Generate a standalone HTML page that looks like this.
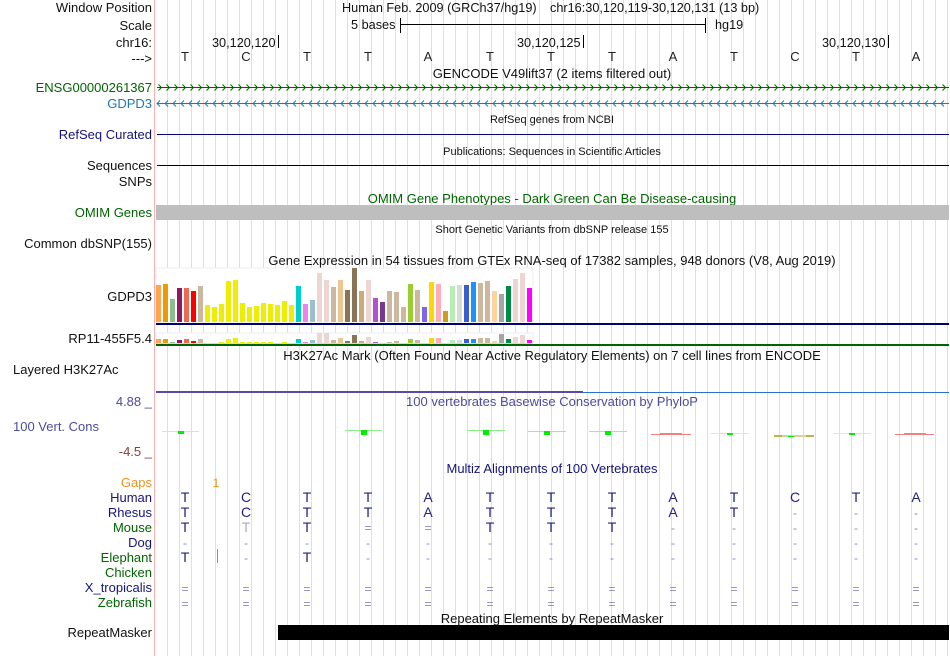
<!DOCTYPE html>
<html><head><meta charset="utf-8"><title>Genome Browser</title>
<style>
html,body{margin:0;padding:0;background:#fff}
body{width:950px;height:656px;overflow:hidden;position:relative}
#grid{position:absolute;left:156px;top:0;width:794px;height:656px;background-image:linear-gradient(to right,#dcdcf4 0,#dcdcf4 1px,transparent 1px,transparent 12px);background-size:12px 100%;background-position:11px 0;background-repeat:repeat-x}
#pink{position:absolute;left:154px;top:0;width:1px;height:656px;background:#ffb0b0}
svg{position:absolute;left:0;top:0}
text{font-family:"Liberation Sans",sans-serif;font-size:13px;fill:#111}
.l{text-anchor:end}
.c{text-anchor:middle}
.s{font-size:11px}
.r{font-size:12.7px}
.g{fill:#006400}
.n{fill:#151578}
.m text{text-anchor:middle;font-size:14px;fill:#22227f}
.t text{text-anchor:middle;font-size:13px;fill:#222}
.e text{text-anchor:middle;font-size:12px;fill:#8888bb}
</style></head><body>
<div id="grid"></div><div id="pink"></div>
<svg width="950" height="656" viewBox="0 0 950 656" shape-rendering="crispEdges">
<defs>
<pattern id="fw" x="158" y="84" width="8" height="7" patternUnits="userSpaceOnUse"><path d="M0.5 0.5L3.5 3.5L0.5 6.5" fill="none" stroke="#006400" stroke-width="1" shape-rendering="auto"/></pattern>
<pattern id="bw" x="156" y="100" width="8" height="7" patternUnits="userSpaceOnUse"><path d="M4 0.5L1 3.5L4 6.5" fill="none" stroke="#1f77b4" stroke-width="1" shape-rendering="auto"/></pattern>
</defs>

<!-- labels -->
<text x="152" y="12" class="l">Window Position</text>
<text x="152" y="30" class="l">Scale</text>
<text x="152" y="47" class="l">chr16:</text>
<text x="152" y="63" class="l">---&gt;</text>
<text x="152" y="92" class="l g">ENSG00000261367</text>
<text x="152" y="108" class="l" style="fill:#1f77b4">GDPD3</text>
<text x="152" y="139" class="l n">RefSeq Curated</text>
<text x="152" y="170" class="l">Sequences</text>
<text x="152" y="186" class="l">SNPs</text>
<text x="152" y="217" class="l g">OMIM Genes</text>
<text x="152" y="248" class="l">Common dbSNP(155)</text>
<text x="152" y="301" class="l">GDPD3</text>
<text x="152" y="343" class="l">RP11-455F5.4</text>
<text x="13" y="374">Layered H3K27Ac</text>
<text x="152" y="406" class="l" style="fill:#4c4c9e">4.88 _</text>
<text x="13" y="431" style="fill:#4c4c9e">100 Vert. Cons</text>
<text x="152" y="456" class="l" style="fill:#8b3c3c">-4.5 _</text>
<text x="152" y="487" class="l" style="fill:#f0921e">Gaps</text>
<text x="152" y="502" class="l n">Human</text>
<text x="152" y="517" class="l n">Rhesus</text>
<text x="152" y="532" class="l g">Mouse</text>
<text x="152" y="547" class="l n">Dog</text>
<text x="152" y="562" class="l g">Elephant</text>
<text x="152" y="577" class="l g">Chicken</text>
<text x="152" y="592" class="l n">X_tropicalis</text>
<text x="152" y="607" class="l g">Zebrafish</text>
<text x="152" y="637" class="l">RepeatMasker</text>

<!-- ruler -->
<text x="342" y="12" class="r">Human Feb. 2009 (GRCh37/hg19)</text>
<text x="550" y="12" class="r">chr16:30,120,119-30,120,131 (13 bp)</text>
<text x="351" y="29" class="r">5 bases</text>
<rect x="400" y="18" width="1" height="15" fill="#000"/>
<rect x="400" y="24" width="306" height="1" fill="#000"/>
<rect x="705" y="18" width="1" height="15" fill="#000"/>
<text x="715" y="29" class="r">hg19</text>
<text x="212" y="47" class="r">30,120,120</text><rect x="278" y="35" width="1" height="13" fill="#000"/>
<text x="517" y="47" class="r">30,120,125</text><rect x="583" y="35" width="1" height="13" fill="#000"/>
<text x="822" y="47" class="r">30,120,130</text><rect x="888" y="35" width="1" height="13" fill="#000"/>
<g class="t">
<text x="185" y="61">T</text><text x="246" y="61">C</text><text x="307" y="61">T</text><text x="368" y="61">T</text><text x="428" y="61">A</text><text x="490" y="61">T</text><text x="551" y="61">T</text><text x="612" y="61">T</text><text x="673" y="61">A</text><text x="734" y="61">T</text><text x="795" y="61">C</text><text x="856" y="61">T</text><text x="916" y="61">A</text>
</g>

<!-- gene tracks -->
<text x="552" y="78" class="c">GENCODE V49lift37 (2 items filtered out)</text>
<rect x="157" y="87" width="792" height="1" fill="#006400"/>
<rect x="157" y="84" width="792" height="7" fill="url(#fw)"/>
<rect x="157" y="103" width="792" height="1" fill="#1f77b4"/>
<rect x="156" y="100" width="793" height="7" fill="url(#bw)"/>
<text x="552" y="123" class="c s">RefSeq genes from NCBI</text>
<rect x="157" y="134" width="792" height="1" fill="#000080"/>
<text x="552" y="155" class="c s">Publications: Sequences in Scientific Articles</text>
<rect x="157" y="165" width="792" height="1" fill="#000"/>
<text x="552" y="203" class="c g">OMIM Gene Phenotypes - Dark Green Can Be Disease-causing</text>
<rect x="156" y="205" width="793" height="15" fill="#bebebe"/>
<text x="552" y="233" class="c s">Short Genetic Variants from dbSNP release 155</text>
<text x="552" y="265" class="c">Gene Expression in 54 tissues from GTEx RNA-seq of 17382 samples, 948 donors (V8, Aug 2019)</text>

<!-- GTEx main -->
<rect x="156" y="268" width="377" height="55" fill="#fff" stroke="#ececf0" stroke-width="1"/>
<g>
<rect x="156" y="285" width="5" height="37" fill="#FFA54F"/><rect x="163" y="284" width="5" height="38" fill="#EE9A00"/><rect x="170" y="299" width="5" height="23" fill="#8FBC8F"/><rect x="177" y="288" width="5" height="34" fill="#8B1C62"/><rect x="184" y="288" width="5" height="34" fill="#EE6A50"/><rect x="191" y="291" width="5" height="31" fill="#FF0000"/><rect x="198" y="286" width="5" height="36" fill="#CDB79E"/>
<rect x="205" y="305" width="5" height="17" fill="#EEEE00"/><rect x="212" y="307" width="5" height="15" fill="#EEEE00"/><rect x="219" y="304" width="5" height="18" fill="#EEEE00"/><rect x="226" y="281" width="5" height="41" fill="#EEEE00"/><rect x="233" y="280" width="5" height="42" fill="#EEEE00"/><rect x="240" y="303" width="5" height="19" fill="#EEEE00"/><rect x="247" y="307" width="5" height="15" fill="#EEEE00"/><rect x="254" y="306" width="5" height="16" fill="#EEEE00"/><rect x="261" y="303" width="5" height="19" fill="#EEEE00"/><rect x="268" y="304" width="5" height="18" fill="#EEEE00"/><rect x="275" y="305" width="5" height="17" fill="#EEEE00"/><rect x="282" y="301" width="5" height="21" fill="#EEEE00"/><rect x="289" y="305" width="5" height="17" fill="#EEEE00"/>
<rect x="296" y="286" width="5" height="36" fill="#00CDCD"/><rect x="303" y="304" width="5" height="18" fill="#EE82EE"/><rect x="310" y="300" width="5" height="22" fill="#9AC0CD"/><rect x="317" y="273" width="5" height="49" fill="#EED5D2"/><rect x="324" y="280" width="5" height="42" fill="#EED5D2"/><rect x="331" y="287" width="5" height="35" fill="#CDB79E"/><rect x="338" y="280" width="5" height="42" fill="#EEC591"/><rect x="345" y="290" width="5" height="32" fill="#8B7355"/><rect x="352" y="268" width="5" height="54" fill="#8B7355"/><rect x="359" y="291" width="5" height="31" fill="#CDAA7D"/><rect x="366" y="280" width="5" height="42" fill="#EED5D2"/><rect x="373" y="298" width="5" height="24" fill="#B452CD"/><rect x="380" y="302" width="5" height="20" fill="#7A378B"/><rect x="387" y="291" width="5" height="31" fill="#CDB79E"/><rect x="394" y="292" width="5" height="30" fill="#CDB79E"/><rect x="401" y="307" width="5" height="15" fill="#CDB79E"/><rect x="408" y="284" width="5" height="38" fill="#9ACD32"/><rect x="415" y="290" width="5" height="32" fill="#CDB79E"/><rect x="422" y="307" width="5" height="15" fill="#7A67EE"/><rect x="429" y="282" width="5" height="40" fill="#FFD700"/><rect x="436" y="284" width="5" height="38" fill="#FFAEB9"/><rect x="443" y="311" width="5" height="11" fill="#CD9B1D"/><rect x="450" y="286" width="5" height="36" fill="#B4EEB4"/><rect x="457" y="285" width="5" height="37" fill="#D9D9D9"/><rect x="464" y="285" width="5" height="37" fill="#3A5FCD"/><rect x="471" y="282" width="5" height="40" fill="#1E90FF"/><rect x="478" y="283" width="5" height="39" fill="#CDB79E"/><rect x="485" y="281" width="5" height="41" fill="#CDB79E"/><rect x="492" y="291" width="5" height="31" fill="#FFD39B"/><rect x="499" y="294" width="5" height="28" fill="#A6A6A6"/><rect x="506" y="286" width="5" height="36" fill="#008B45"/><rect x="513" y="279" width="5" height="43" fill="#EED5D2"/><rect x="520" y="273" width="5" height="49" fill="#EED5D2"/><rect x="527" y="288" width="5" height="34" fill="#FF00FF"/>
</g>
<rect x="156" y="323" width="793" height="2" fill="#00006e"/>

<!-- GTEx small -->
<rect x="156" y="333" width="377" height="11" fill="#fff" stroke="#ececf0" stroke-width="1"/>
<rect x="156" y="343" width="377" height="1" fill="#d8d8d8"/>
<g>
<rect x="156" y="339" width="5" height="4" fill="#FFA54F"/><rect x="163" y="339" width="5" height="4" fill="#EE9A00"/><rect x="170" y="342" width="5" height="1" fill="#8FBC8F"/><rect x="177" y="340" width="5" height="3" fill="#8B1C62"/><rect x="184" y="339" width="5" height="4" fill="#EE6A50"/><rect x="191" y="341" width="5" height="2" fill="#FF0000"/><rect x="198" y="339" width="5" height="4" fill="#CDB79E"/><rect x="219" y="342" width="5" height="1" fill="#EEEE00"/><rect x="226" y="339" width="5" height="4" fill="#EEEE00"/><rect x="233" y="338" width="5" height="5" fill="#EEEE00"/><rect x="240" y="342" width="5" height="1" fill="#EEEE00"/><rect x="247" y="342" width="5" height="1" fill="#EEEE00"/><rect x="254" y="342" width="5" height="1" fill="#EEEE00"/><rect x="261" y="342" width="5" height="1" fill="#EEEE00"/><rect x="268" y="342" width="5" height="1" fill="#EEEE00"/><rect x="282" y="342" width="5" height="1" fill="#EEEE00"/><rect x="296" y="339" width="5" height="4" fill="#00CDCD"/><rect x="303" y="342" width="5" height="1" fill="#EE82EE"/><rect x="310" y="340" width="5" height="3" fill="#9AC0CD"/><rect x="317" y="333" width="5" height="10" fill="#EED5D2"/><rect x="324" y="333" width="5" height="10" fill="#EED5D2"/><rect x="331" y="340" width="5" height="3" fill="#CDB79E"/><rect x="338" y="338" width="5" height="5" fill="#EEC591"/><rect x="345" y="341" width="5" height="2" fill="#8B7355"/><rect x="352" y="335" width="5" height="8" fill="#8B7355"/><rect x="359" y="341" width="5" height="2" fill="#CDAA7D"/><rect x="366" y="337" width="5" height="6" fill="#EED5D2"/><rect x="373" y="342" width="5" height="1" fill="#B452CD"/><rect x="387" y="342" width="5" height="1" fill="#CDB79E"/><rect x="394" y="341" width="5" height="2" fill="#CDB79E"/><rect x="408" y="339" width="5" height="4" fill="#9ACD32"/><rect x="415" y="340" width="5" height="3" fill="#CDB79E"/><rect x="429" y="338" width="5" height="5" fill="#FFD700"/><rect x="436" y="338" width="5" height="5" fill="#FFAEB9"/><rect x="450" y="340" width="5" height="3" fill="#B4EEB4"/><rect x="457" y="340" width="5" height="3" fill="#D9D9D9"/><rect x="464" y="339" width="5" height="4" fill="#3A5FCD"/><rect x="471" y="339" width="5" height="4" fill="#1E90FF"/><rect x="478" y="338" width="5" height="5" fill="#CDB79E"/><rect x="485" y="338" width="5" height="5" fill="#CDB79E"/><rect x="492" y="341" width="5" height="2" fill="#FFD39B"/><rect x="499" y="334" width="5" height="9" fill="#A6A6A6"/><rect x="506" y="339" width="5" height="4" fill="#008B45"/><rect x="513" y="337" width="5" height="6" fill="#EED5D2"/><rect x="520" y="335" width="5" height="8" fill="#EED5D2"/><rect x="527" y="340" width="5" height="3" fill="#FF00FF"/>
</g>
<rect x="156" y="344" width="793" height="2" fill="#006400"/>

<!-- H3K27Ac -->
<text x="552" y="360" class="c">H3K27Ac Mark (Often Found Near Active Regulatory Elements) on 7 cell lines from ENCODE</text>
<rect x="156" y="391" width="427" height="2" fill="#5a4aa8"/>
<rect x="583" y="392" width="366" height="1" fill="#2a6fd0"/>

<!-- Conservation -->
<text x="552" y="406" class="c" style="fill:#4c4c9e">100 vertebrates Basewise Conservation by PhyloP</text>
<g>
<rect x="162" y="431" width="37" height="1" fill="#b8f8b8"/><rect x="178" y="431" width="6" height="3" fill="#00ee00"/>
<rect x="345" y="430" width="37" height="1" fill="#88ee88"/><rect x="361" y="430" width="6" height="5" fill="#00ee00"/>
<rect x="467" y="430" width="38" height="1" fill="#88ee88"/><rect x="483" y="430" width="6" height="5" fill="#00ee00"/>
<rect x="528" y="431" width="38" height="1" fill="#99ee99"/><rect x="544" y="431" width="6" height="4" fill="#00ee00"/>
<rect x="589" y="431" width="38" height="1" fill="#99ee99"/><rect x="605" y="431" width="6" height="4" fill="#00ee00"/>
<path d="M651 434H660V433H682V434H691V435H651Z" fill="#f08080"/>
<rect x="711" y="433" width="38" height="1" fill="#c8f4c8"/><rect x="727" y="433" width="6" height="2" fill="#00ee00"/>
<rect x="774" y="435" width="40" height="2" fill="#d4d49a"/><rect x="774" y="435" width="8" height="2" fill="#b8b84a"/><rect x="806" y="435" width="8" height="2" fill="#b8b84a"/><rect x="788" y="436" width="6" height="1" fill="#00ee00"/>
<rect x="833" y="433" width="38" height="1" fill="#c8f4c8"/><rect x="849" y="433" width="6" height="2" fill="#00ee00"/>
<path d="M895 434H904V433H926V434H934V435H895Z" fill="#f08080"/>
</g>

<!-- Multiz -->
<text x="552" y="473" class="c n">Multiz Alignments of 100 Vertebrates</text>
<text x="216" y="487" class="c" style="fill:#f0921e;font-size:12px">1</text>
<g class="m">
<text x="185" y="502">T</text><text x="246" y="502">C</text><text x="307" y="502">T</text><text x="368" y="502">T</text><text x="428" y="502">A</text><text x="490" y="502">T</text><text x="551" y="502">T</text><text x="612" y="502">T</text><text x="673" y="502">A</text><text x="734" y="502">T</text><text x="795" y="502">C</text><text x="856" y="502">T</text><text x="916" y="502">A</text>
<text x="185" y="517">T</text><text x="246" y="517">C</text><text x="307" y="517">T</text><text x="368" y="517">T</text><text x="428" y="517">A</text><text x="490" y="517">T</text><text x="551" y="517">T</text><text x="612" y="517">T</text><text x="673" y="517">A</text><text x="734" y="517">T</text>
<text x="185" y="532">T</text><text x="246" y="532" style="fill:#a8a8cc">T</text><text x="307" y="532">T</text><text x="490" y="532">T</text><text x="551" y="532">T</text><text x="612" y="532">T</text>
<text x="185" y="562">T</text><text x="307" y="562">T</text>
</g>
<g class="e">
<text x="795" y="517">-</text><text x="856" y="517">-</text><text x="916" y="517">-</text>
<text x="368" y="532">=</text><text x="428" y="532">=</text><text x="673" y="532">-</text><text x="734" y="532">-</text><text x="795" y="532">-</text><text x="856" y="532">-</text><text x="916" y="532">-</text>
<text x="185" y="547">-</text><text x="246" y="547">-</text><text x="307" y="547">-</text><text x="368" y="547">-</text><text x="428" y="547">-</text><text x="490" y="547">-</text><text x="551" y="547">-</text><text x="612" y="547">-</text><text x="673" y="547">-</text><text x="734" y="547">-</text><text x="795" y="547">-</text><text x="856" y="547">-</text><text x="916" y="547">-</text>
<text x="246" y="562">-</text><text x="368" y="562">-</text><text x="428" y="562">-</text><text x="490" y="562">-</text><text x="551" y="562">-</text><text x="612" y="562">-</text><text x="673" y="562">-</text><text x="734" y="562">-</text><text x="795" y="562">-</text><text x="856" y="562">-</text><text x="916" y="562">-</text>
<text x="185" y="593">=</text><text x="246" y="593">=</text><text x="307" y="593">=</text><text x="368" y="593">=</text><text x="428" y="593">=</text><text x="490" y="593">=</text><text x="551" y="593">=</text><text x="612" y="593">=</text><text x="673" y="593">=</text><text x="734" y="593">=</text><text x="795" y="593">=</text><text x="856" y="593">=</text><text x="916" y="593">=</text>
<text x="185" y="608">=</text><text x="246" y="608">=</text><text x="307" y="608">=</text><text x="368" y="608">=</text><text x="428" y="608">=</text><text x="490" y="608">=</text><text x="551" y="608">=</text><text x="612" y="608">=</text><text x="673" y="608">=</text><text x="734" y="608">=</text><text x="795" y="608">=</text><text x="856" y="608">=</text><text x="916" y="608">=</text>
</g>
<rect x="217" y="549" width="1" height="14" fill="#d08020"/>

<!-- RepeatMasker -->
<text x="552" y="623" class="c">Repeating Elements by RepeatMasker</text>
<rect x="278" y="625" width="671" height="15" fill="#000"/>
</svg>
</body></html>
